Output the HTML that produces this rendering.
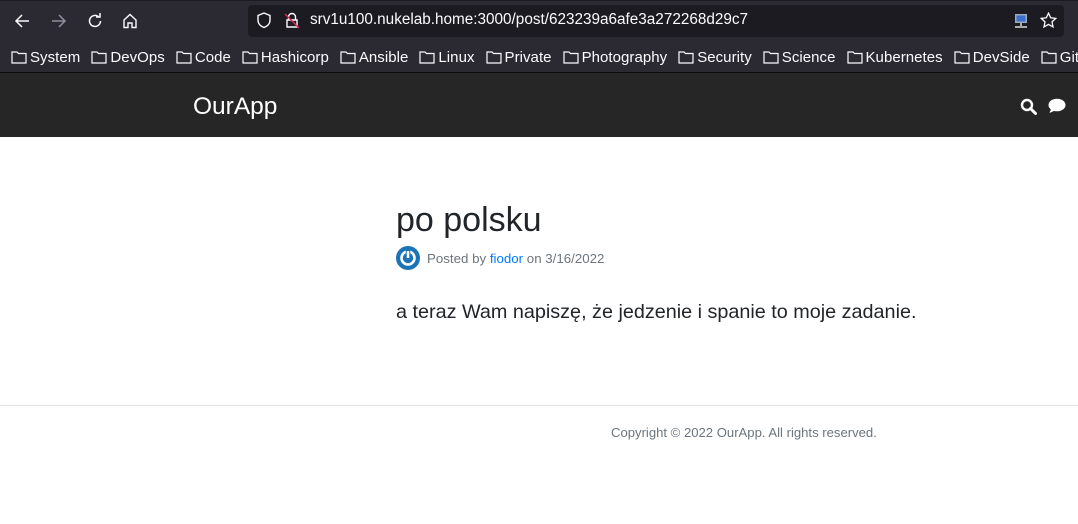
<!DOCTYPE html>
<html><head><meta charset="utf-8"><style>
*{margin:0;padding:0;box-sizing:border-box}
body{width:1078px;height:524px;background:#fff;font-family:"Liberation Sans",sans-serif;position:relative;overflow:hidden}
.tb{position:absolute;left:0;top:0;width:1078px;height:73px;background:#2b2a33}
.top{position:absolute;left:0;top:0;width:1078px;height:1px;background:#1c1b22}
.url{position:absolute;left:248px;top:5px;width:816px;height:32px;background:#1c1b22;border-radius:4px}
.ut{position:absolute;left:310px;top:11px;color:#fbfbfe;font-size:15.3px}
.bm{position:absolute;top:49px;color:#fbfbfe;font-size:15px;letter-spacing:0.05px;white-space:nowrap}
.bm span{display:inline-block;margin-right:11px}
.bm svg{vertical-align:-2px;margin-right:3px}
.sep{position:absolute;left:0;top:72px;width:1078px;height:1px;background:#0c0c0d}
.nav{position:absolute;left:0;top:73px;width:1078px;height:64px;background:#262626}
.brand{position:absolute;left:193px;top:93px;color:#fff;font-size:24.5px}
h1{position:absolute;left:396px;top:201px;font-weight:normal;font-size:34px;color:#212529}
.meta{position:absolute;left:427px;top:251px;font-size:13.3px;color:#6c757d}
.meta a{color:#007bff;text-decoration:none}
.body{position:absolute;left:396px;top:301px;font-size:19.8px;color:#212529}
.hr{position:absolute;left:0;top:405px;width:1078px;height:1px;background:#dee2e6}
.foot{position:absolute;left:611px;top:425px;font-size:13.1px;color:#6c757d}
</style></head><body>
<div class="tb"></div><div class="top"></div>
<svg style="position:absolute;left:14px;top:13px" width="16" height="16" viewBox="0 0 16 16" fill="none" stroke="#fbfbfe" stroke-width="1.5"><path d="M15 8H2M8 2L2 8l6 6"/></svg>
<svg style="position:absolute;left:51px;top:13px" width="16" height="16" viewBox="0 0 16 16" fill="none" stroke="#8f8f9d" stroke-width="1.5"><path d="M1 8h13M8 2l6 6-6 6"/></svg>
<svg style="position:absolute;left:87px;top:13px" width="16" height="16" viewBox="0 0 16 16" fill="none" stroke="#fbfbfe" stroke-width="1.5"><path d="M13.5 8A5.5 5.5 0 1 1 11.5 3.7"/><path d="M9 4h4V0" /></svg>
<svg style="position:absolute;left:122px;top:13px" width="16" height="16" viewBox="0 0 16 16" fill="none" stroke="#fbfbfe" stroke-width="1.4"><path d="M2 7L8 1.5 14 7V14.5H10V10H6V14.5H2Z"/></svg>
<div class="url"></div>
<svg style="position:absolute;left:256px;top:12px" width="16" height="17" viewBox="0 0 16 17" fill="none" stroke="#fbfbfe" stroke-width="1.4"><path d="M8 1L2 3.5V8c0 4 3 6.5 6 7.5 3-1 6-3.5 6-7.5V3.5Z"/></svg>
<svg style="position:absolute;left:284px;top:12px" width="16" height="17" viewBox="0 0 16 17" fill="none" stroke-width="1.4"><path stroke="#fbfbfe" d="M4.5 8V5a3.5 3.5 0 0 1 7 0v3M3 8h10v7H3Z"/><path stroke="#e22850" d="M1 2l14 14"/></svg>
<div class="ut">srv1u100.nukelab.home:3000/post/623239a6afe3a272268d29c7</div>
<svg style="position:absolute;left:1013px;top:13px" width="16" height="16" viewBox="0 0 16 16"><rect x="2" y="1" width="12" height="9" fill="#9ab" /><rect x="3.5" y="2.5" width="9" height="6" fill="#3a6fd0"/><rect x="7" y="10" width="2" height="3" fill="#aaa"/><rect x="2" y="13" width="12" height="2" fill="#aaa"/></svg>
<svg style="position:absolute;left:1040px;top:12px" width="17" height="17" viewBox="0 0 17 17" fill="none" stroke="#fbfbfe" stroke-width="1.3"><path d="M8.5 1.2l2.2 4.6 5 .6-3.7 3.5 1 5-4.5-2.5-4.5 2.5 1-5L1.3 6.4l5-.6Z"/></svg>
<div class="bm" style="left:11px">
<span><svg width="16" height="14" viewBox="0 0 16 14" fill="none" stroke="#fbfbfe" stroke-width="1.2"><path d="M1 2h5l1.5 1.5H15V13H1Z"/></svg>System</span><span><svg width="16" height="14" viewBox="0 0 16 14" fill="none" stroke="#fbfbfe" stroke-width="1.2"><path d="M1 2h5l1.5 1.5H15V13H1Z"/></svg>DevOps</span><span><svg width="16" height="14" viewBox="0 0 16 14" fill="none" stroke="#fbfbfe" stroke-width="1.2"><path d="M1 2h5l1.5 1.5H15V13H1Z"/></svg>Code</span><span><svg width="16" height="14" viewBox="0 0 16 14" fill="none" stroke="#fbfbfe" stroke-width="1.2"><path d="M1 2h5l1.5 1.5H15V13H1Z"/></svg>Hashicorp</span><span><svg width="16" height="14" viewBox="0 0 16 14" fill="none" stroke="#fbfbfe" stroke-width="1.2"><path d="M1 2h5l1.5 1.5H15V13H1Z"/></svg>Ansible</span><span><svg width="16" height="14" viewBox="0 0 16 14" fill="none" stroke="#fbfbfe" stroke-width="1.2"><path d="M1 2h5l1.5 1.5H15V13H1Z"/></svg>Linux</span><span><svg width="16" height="14" viewBox="0 0 16 14" fill="none" stroke="#fbfbfe" stroke-width="1.2"><path d="M1 2h5l1.5 1.5H15V13H1Z"/></svg>Private</span><span><svg width="16" height="14" viewBox="0 0 16 14" fill="none" stroke="#fbfbfe" stroke-width="1.2"><path d="M1 2h5l1.5 1.5H15V13H1Z"/></svg>Photography</span><span><svg width="16" height="14" viewBox="0 0 16 14" fill="none" stroke="#fbfbfe" stroke-width="1.2"><path d="M1 2h5l1.5 1.5H15V13H1Z"/></svg>Security</span><span><svg width="16" height="14" viewBox="0 0 16 14" fill="none" stroke="#fbfbfe" stroke-width="1.2"><path d="M1 2h5l1.5 1.5H15V13H1Z"/></svg>Science</span><span><svg width="16" height="14" viewBox="0 0 16 14" fill="none" stroke="#fbfbfe" stroke-width="1.2"><path d="M1 2h5l1.5 1.5H15V13H1Z"/></svg>Kubernetes</span><span><svg width="16" height="14" viewBox="0 0 16 14" fill="none" stroke="#fbfbfe" stroke-width="1.2"><path d="M1 2h5l1.5 1.5H15V13H1Z"/></svg>DevSide</span><span><svg width="16" height="14" viewBox="0 0 16 14" fill="none" stroke="#fbfbfe" stroke-width="1.2"><path d="M1 2h5l1.5 1.5H15V13H1Z"/></svg>GitHub</span>
</div>
<div class="sep"></div>
<div class="nav"></div>
<div class="brand">OurApp</div>
<svg style="position:absolute;left:1020px;top:98px" width="17" height="17" viewBox="0 0 17 17" fill="none" stroke="#fff"><circle cx="7" cy="7" r="5" stroke-width="2.4"/><path d="M10.5 10.5L15.5 15.5" stroke-width="3" stroke-linecap="round"/></svg>
<svg style="position:absolute;left:1048px;top:98px" width="18" height="16" viewBox="0 0 18 16"><ellipse cx="9" cy="7" rx="8.5" ry="6.3" fill="#fff"/><path d="M3 11L1.5 15 7 12.5Z" fill="#fff"/></svg>
<h1>po polsku</h1>
<svg style="position:absolute;left:396px;top:246px" width="24" height="24" viewBox="0 0 24 24"><circle cx="12" cy="12" r="12" fill="#1a74b8"/><circle cx="12" cy="12" r="6.5" fill="none" stroke="#fff" stroke-width="2.6"/><path d="M12 4v8" stroke="#1a74b8" stroke-width="4.5"/><path d="M12 5v7" stroke="#fff" stroke-width="2.6"/></svg>
<div class="meta">Posted by <a>fiodor</a> on 3/16/2022</div>
<div class="body">a teraz Wam napiszę, że jedzenie i spanie to moje zadanie.</div>
<div class="hr"></div>
<div class="foot">Copyright © 2022 OurApp. All rights reserved.</div>
</body></html>
